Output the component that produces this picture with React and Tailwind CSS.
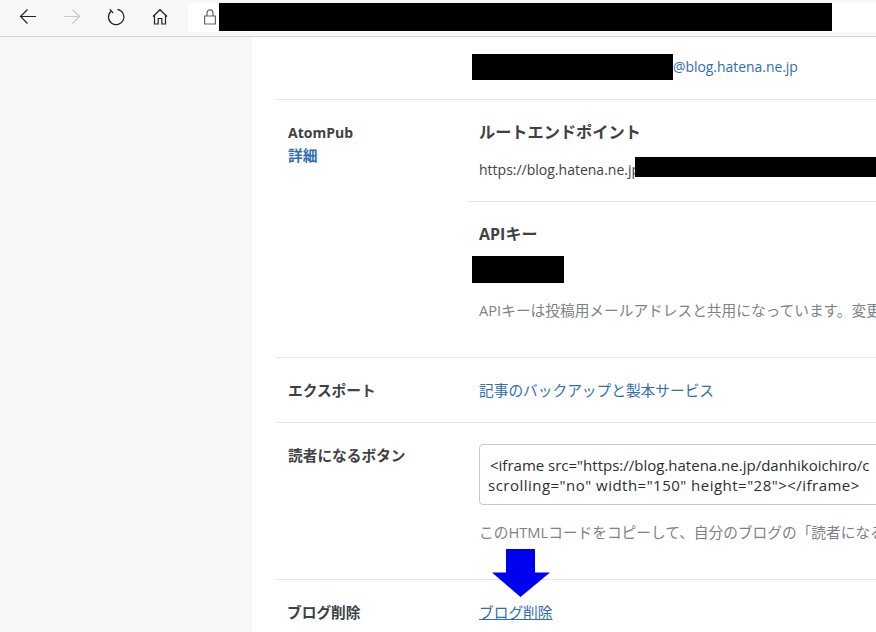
import React from "react";

const font = { fontFamily: '"Open Sans", "Noto Sans CJK JP", sans-serif' };

function Toolbar() {
  return (
    <div className="h-[37px] shrink-0 flex items-start bg-[#f7f7f7] border-b border-[#d2d2d2]">
      <div className="w-[188px] h-[36px] shrink-0">
        <svg width="188" height="36" viewBox="0 0 188 36" fill="none" strokeWidth="1.2">
          <path d="M20.5 16.5H36M27.5 9.5l-7 7 7 7" stroke="#222" />
          <path d="M64 16.5h15.5M72.5 9.5l7 7-7 7" stroke="#c8c8c8" />
          <path d="M117.5 9.4a7.7 7.7 0 1 1-6.4 1.8M109.8 9.2l3.4 4" stroke="#222" />
          <path d="M153 16.5l7-6.8 7 6.8M154.5 15.5v8.5h3.7v-5.5h3.6v5.5h3.7v-8.5" stroke="#222" />
        </svg>
      </div>
      <div className="flex-1 h-[29px] mt-[3px] bg-white rounded-l-[4px] flex items-start pl-[16px]">
        <svg width="12" height="16" viewBox="0 0 12 16" fill="none" stroke="#666" strokeWidth="1.2" className="shrink-0 mt-[6px]">
          <path d="M3 7V3.8a3 3 0 0 1 6 0V7M.6 7h10.8v8H.6z" />
        </svg>
        <div className="w-[613px] h-[28px] ml-[3px] bg-black shrink-0" />
      </div>
    </div>
  );
}

export default function App() {
  return (
    <div className="h-[632px] w-[876px] overflow-hidden flex flex-col bg-white relative" style={font}>
      <Toolbar />
      <div className="flex flex-1 min-h-0">
        <div className="w-[252px] shrink-0 bg-[#f6f7f9]" />
        <div className="flex-1 min-w-0 pl-[25px] overflow-hidden">
          <div className="h-[63px] border-b border-[#e3e5e8] pl-[195px] pt-[17px] flex items-start">
            <div className="w-[201px] h-[26px] bg-black shrink-0" />
            <a className="text-[13.9px] text-[#2f6db5] leading-[26px]">@blog.hatena.ne.jp</a>
          </div>

          <div className="flex border-b border-[#e3e5e8] h-[258px]">
            <div className="w-[191px] shrink-0 pl-[11px] pt-[23px]">
              <div className="text-[14px] font-bold text-[#3d4245] leading-[20px]">AtomPub</div>
              <a className="text-[14.7px] font-bold text-[#2f6db5] leading-[24px] block">詳細</a>
            </div>
            <div className="flex-1 min-w-0">
              <div className="h-[102px] border-b border-[#e3e5e8] pl-[11px] pt-[21px]">
                <div className="text-[16.2px] font-bold text-[#3d4245] leading-[22px]">ルートエンドポイント</div>
                <div className="flex items-start h-[20px] mt-[14px] text-[14px] leading-[26px] text-[#3d4245] whitespace-nowrap">
                  <span className="w-[156px] shrink-0">https://blog.hatena.ne.jp</span>
                  <div className="w-[241px] h-[20px] bg-black shrink-0" />
                </div>
              </div>
              <div className="pt-[21px]">
                <div className="pl-[11px] text-[16px] font-bold text-[#3d4245] leading-[22px]">APIキー</div>
                <div className="ml-[4px] mt-[11px] w-[92px] h-[27px] bg-black" />
                <div className="pl-[11px] mt-[16px] text-[14.7px] text-[#7d8287] leading-[22px] whitespace-nowrap">
                  APIキーは投稿用メールアドレスと共用になっています。変更
                </div>
              </div>
            </div>
          </div>

          <div className="flex items-center border-b border-[#e3e5e8] h-[65px]">
            <div className="w-[191px] shrink-0 pl-[11px] text-[14.7px] font-bold text-[#3d4245] leading-[20px]">エクスポート</div>
            <a className="pl-[11px] text-[14.7px] text-[#2f6db5] leading-[20px] -mt-[1px]">記事のバックアップと製本サービス</a>
          </div>

          <div className="flex border-b border-[#e3e5e8] h-[157px]">
            <div className="w-[191px] shrink-0 pl-[11px] pt-[22px] text-[14.7px] font-bold text-[#3d4245] leading-[20px]">
              読者になるボタン
            </div>
            <div className="flex-1 min-w-0 pl-[11px] pt-[21px]">
              <div className="w-[500px] h-[61px] border border-[#c3c8cc] rounded-[4px] pl-[8px] pt-[10px] text-[15px] text-[#2a2e31] leading-[20px] whitespace-nowrap overflow-hidden">
                <div className="pl-[2px]">{'<iframe src="https://blog.hatena.ne.jp/danhikoichiro/c'}</div>
                <div className="tracking-[0.48px]">{'scrolling="no" width="150" height="28"></iframe>'}</div>
              </div>
              <div className="mt-[16px] text-[14.7px] text-[#7d8287] leading-[22px] whitespace-nowrap">
                このHTMLコードをコピーして、自分のブログの「読者になる
              </div>
            </div>
          </div>

          <div className="flex items-center h-[66px] -mt-[1px]">
            <div className="w-[191px] shrink-0 pl-[10px] text-[14.7px] font-bold text-[#3d4245]">ブログ削除</div>
            <a className="pl-[11px] text-[14.7px] text-[#2f6db5] underline">ブログ削除</a>
          </div>
        </div>
      </div>
      <svg className="absolute left-[492px] top-[549px]" width="58" height="48" viewBox="0 0 58 48">
        <path d="M14 0h29v23.5h15L28.5 48 0 23.5h14z" fill="#0000f0" />
      </svg>
    </div>
  );
}
